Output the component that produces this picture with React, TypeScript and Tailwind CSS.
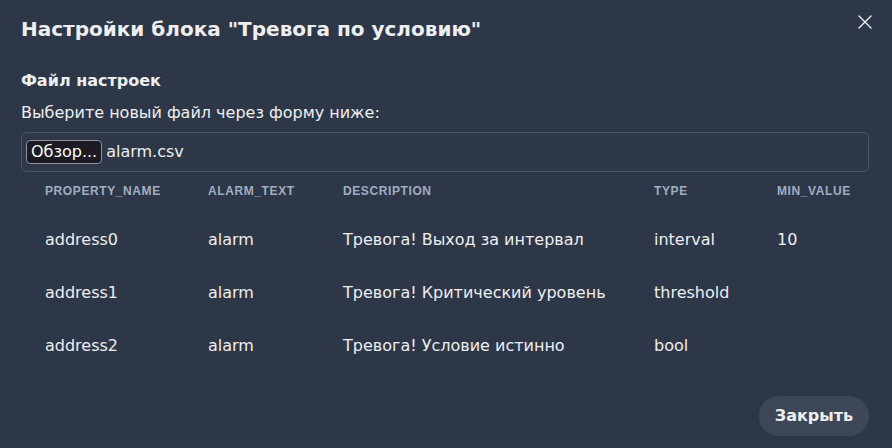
import { X } from "lucide-react";

const rows = [
  { name: "address0", text: "alarm", desc: "Тревога! Выход за интервал", type: "interval", min: "10" },
  { name: "address1", text: "alarm", desc: "Тревога! Критический уровень", type: "threshold", min: "" },
  { name: "address2", text: "alarm", desc: "Тревога! Условие истинно", type: "bool", min: "" },
];

const headers = ["property_name", "alarm_text", "description", "type", "min_value"];

export default function App() {
  return (
    <div
      className="relative flex h-[448px] w-[892px] flex-col overflow-hidden bg-[#2D3748] text-[#EDEEF0]"
      style={{ fontFamily: '"DejaVu Sans", sans-serif' }}
    >
      <button className="absolute right-[11px] top-[6px] flex h-8 w-8 items-center justify-center rounded-md text-[#EDEEF0]">
        <X className="h-6 w-6" strokeWidth={1.4} />
      </button>

      <h2 className="pl-[21px] pt-[15px] text-[20px] font-bold leading-[28px]">
        Настройки блока "Тревога по условию"
      </h2>

      <div className="pl-[21px] pr-[23px] pt-[26px]">
        <h3 className="text-[16px] font-bold leading-[24px]">Файл настроек</h3>
        <p className="mt-[8px] text-[16px] leading-[24px]">Выберите новый файл через форму ниже:</p>
        <div className="mt-[7px] flex h-[40px] items-center gap-[4px] rounded-md border border-[#4A5568] pl-[4px]">
          <span className="flex h-[24px] items-center rounded-[4px] border border-[#8f8f9d] bg-[#1c1b22] px-[4px] text-[16px] text-[#fbfbfe]">
            Обзор...
          </span>
          <span className="text-[16px]">alarm.csv</span>
        </div>
      </div>

      <div className="px-[21px]">
        <div
          className="grid h-[41px] grid-cols-[163px_135px_311px_123px_1fr] items-start pt-[13px] text-[12px] font-bold uppercase leading-[12px] tracking-[0.05em] text-[#A0AEC0]"
          style={{ fontFamily: '"Liberation Sans", Arial, sans-serif' }}
        >
          {headers.map((h) => (
            <div key={h} className="pl-6 whitespace-nowrap">
              {h}
            </div>
          ))}
        </div>
        {rows.map((r) => (
          <div
            key={r.name}
            className="grid h-[53px] grid-cols-[163px_135px_311px_123px_1fr] items-center text-[16px]"
          >
            <div className="pl-6">{r.name}</div>
            <div className="pl-6">{r.text}</div>
            <div className="pl-6 whitespace-nowrap">{r.desc}</div>
            <div className="pl-6">{r.type}</div>
            <div className="pl-6">{r.min}</div>
          </div>
        ))}
      </div>

      <div className="mt-auto flex justify-end pb-[12px] pr-[23px]">
        <button className="h-[40px] w-[110px] rounded-full bg-[#3E4757] text-[16px] font-bold text-[#EDEEF0]">
          Закрыть
        </button>
      </div>
    </div>
  );
}
